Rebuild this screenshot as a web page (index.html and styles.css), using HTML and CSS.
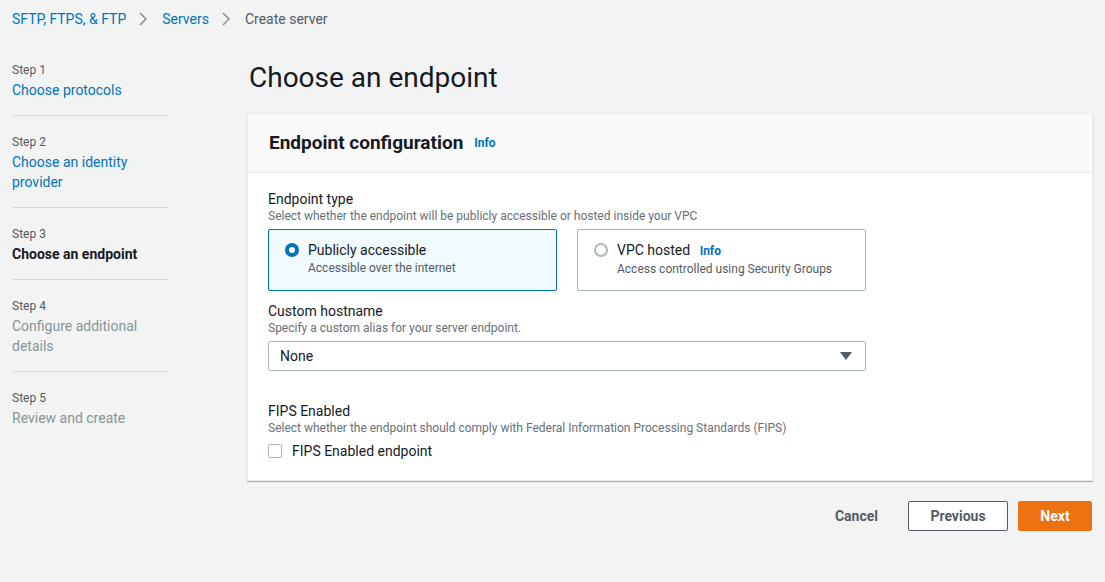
FILE: index.html
```html
<!DOCTYPE html>
<html>
<head>
<meta charset="utf-8">
<link rel="stylesheet" href="styles.css">
</head>
<body>
<nav class="crumbs">
  <a class="crumb-link">SFTP, FTPS, &amp; FTP</a>
  <svg class="chev" viewBox="0 0 10 16" width="10" height="16"><path d="M2 2l6 6-6 6" fill="none" stroke="#879596" stroke-width="1.6"/></svg>
  <a class="crumb-link">Servers</a>
  <svg class="chev" viewBox="0 0 10 16" width="10" height="16"><path d="M2 2l6 6-6 6" fill="none" stroke="#879596" stroke-width="1.6"/></svg>
  <span class="crumb-current">Create server</span>
</nav>
<div class="layout">
  <ul class="steps">
    <li class="step"><div class="step-num">Step 1</div><a class="step-link">Choose protocols</a></li>
    <li class="step"><div class="step-num">Step 2</div><a class="step-link">Choose an identity provider</a></li>
    <li class="step"><div class="step-num">Step 3</div><span class="step-current">Choose an endpoint</span></li>
    <li class="step"><div class="step-num">Step 4</div><span class="step-disabled">Configure additional details</span></li>
    <li class="step last"><div class="step-num">Step 5</div><span class="step-disabled">Review and create</span></li>
  </ul>
  <main class="main">
    <h1 class="title">Choose an endpoint</h1>
    <section class="panel">
      <header class="panel-head">
        <h2 class="panel-title">Endpoint configuration</h2>
        <a class="info">Info</a>
      </header>
      <div class="panel-body">
        <div class="field first">
          <div class="label">Endpoint type</div>
          <div class="desc">Select whether the endpoint will be publicly accessible or hosted inside your VPC</div>
          <div class="tiles">
            <div class="tile selected">
              <span class="radio on"></span>
              <div class="tile-text">
                <div class="tile-label">Publicly accessible</div>
                <div class="tile-desc">Accessible over the internet</div>
              </div>
            </div>
            <div class="tile">
              <span class="radio"></span>
              <div class="tile-text">
                <div class="tile-label">VPC hosted <a class="info">Info</a></div>
                <div class="tile-desc">Access controlled using Security Groups</div>
              </div>
            </div>
          </div>
        </div>
        <div class="field">
          <div class="label">Custom hostname</div>
          <div class="desc">Specify a custom alias for your server endpoint.</div>
          <div class="select">
            <span>None</span>
            <svg class="caret" viewBox="0 0 12 10" width="12" height="10"><path d="M0 1h12L6 9z" fill="#545b64"/></svg>
          </div>
        </div>
        <div class="field fips">
          <div class="label">FIPS Enabled</div>
          <div class="desc">Select whether the endpoint should comply with Federal Information Processing Standards (FIPS)</div>
          <label class="check"><span class="box"></span><span>FIPS Enabled endpoint</span></label>
        </div>
      </div>
    </section>
    <div class="actions">
      <button class="btn link">Cancel</button>
      <button class="btn normal">Previous</button>
      <button class="btn primary">Next</button>
    </div>
  </main>
</div>
</body>
</html>
```
FILE: styles.css
```css
* { box-sizing: border-box; }
html, body { margin: 0; padding: 0; }
body {
  background: #f2f3f3;
  font-family: Roboto, "Open Sans", Arial, sans-serif;
  font-size: 14px;
  line-height: 20px;
  color: #16191f;
  width: 1105px;
  height: 582px;
  overflow: hidden;
}
a { cursor: pointer; }
.crumbs {
  display: flex;
  align-items: center;
  padding: 9px 12px 0;
  height: 29px;
}
.crumb-link { color: #0073bb; }
.crumb-current { color: #545b64; }
.chev { display: block; margin: 0 14px 0 12px; }
.layout {
  display: grid;
  grid-template-columns: 156px 1fr;
  column-gap: 79px;
  padding: 0 12px;
}
.steps {
  list-style: none;
  margin: 0;
  padding: 33px 0 0;
}
.step {
  padding: 0 0 15px;
  margin-bottom: 18px;
  border-bottom: 1px solid #d5dbdb;
}
.step.last { border-bottom: none; }
.step-num { font-size: 12px; line-height: 16px; color: #545b64; margin-bottom: 2px; }
.step-link { color: #0073bb; display: block; }
.step-current { font-weight: 700; display: block; }
.step-disabled { color: #879596; display: block; }
.title {
  margin: 31px 0 0 2px;
  font-size: 28px;
  line-height: 36px;
  font-weight: 400;
  color: #16191f;
}
.panel {
  margin-top: 17px;
  background: #fff;
  border: 1px solid #eaeded;
  box-shadow: 0 1px 1px 0 rgba(0,28,36,.3);
}
.panel-head {
  background: #fafafa;
  border-bottom: 1px solid #eaeded;
  height: 59px;
  display: flex;
  align-items: center;
  padding: 0 21px;
  gap: 11px;
}
.panel-title { margin: 0; font-size: 19px; font-weight: 700; line-height: 22px; }
.info { color: #0073bb; font-size: 12px; font-weight: 700; }
.panel-body { padding: 16px 20px 19px; }
.field { margin-bottom: 20px; }
.field.first { margin-bottom: 10px; }
.field.fips { margin-top: 30px; margin-bottom: 0; }
.label { line-height: 20px; }
.desc { font-size: 12px; line-height: 16px; color: #687078; margin-top: -1px; }
.tiles {
  display: grid;
  grid-template-columns: 289px 289px;
  gap: 20px;
  margin-top: 5px;
}
.tile {
  height: 62px;
  border: 1px solid #aab7b8;
  border-radius: 2px;
  display: flex;
  align-items: flex-start;
  padding: 10px 16px;
  gap: 9px;
}
.tile.selected { background: #f1faff; border-color: #0073bb; }
.radio {
  width: 14px; height: 14px; border-radius: 50%;
  border: 2px solid #aab7b8;
  margin-top: 3px;
  flex: none;
}
.radio.on { border: 4px solid #0073bb; background: #fff; }
.tile-label .info { margin-left: 6px; }
.tile-desc { font-size: 12px; line-height: 16px; color: #545b64; margin-top: 0; }
.select {
  margin-top: 5px;
  width: 598px;
  height: 30px;
  border: 1px solid #aab7b8;
  border-radius: 2px;
  display: flex;
  align-items: center;
  justify-content: space-between;
  padding: 0 13px 0 11px;
}
.check { display: flex; align-items: center; gap: 10px; margin-top: 5px; }
.box { width: 14px; height: 14px; border: 1px solid #aab7b8; border-radius: 2px; background: #fff; }
.actions {
  display: flex;
  justify-content: flex-end;
  align-items: center;
  gap: 10px;
  margin-top: 20px;
  padding-right: 1px;
}
.btn {
  font-family: inherit;
  font-size: 14px;
  font-weight: 700;
  height: 30px;
  border-radius: 2px;
  padding: 0 20px;
  cursor: pointer;
}
.btn.link { background: none; border: none; color: #545b64; }
.btn.normal { background: #fff; border: 1px solid #545b64; color: #545b64; width: 100px; }
.btn.primary { background: #ec7211; border: 1px solid #ec7211; color: #fff; width: 74px; }
```
